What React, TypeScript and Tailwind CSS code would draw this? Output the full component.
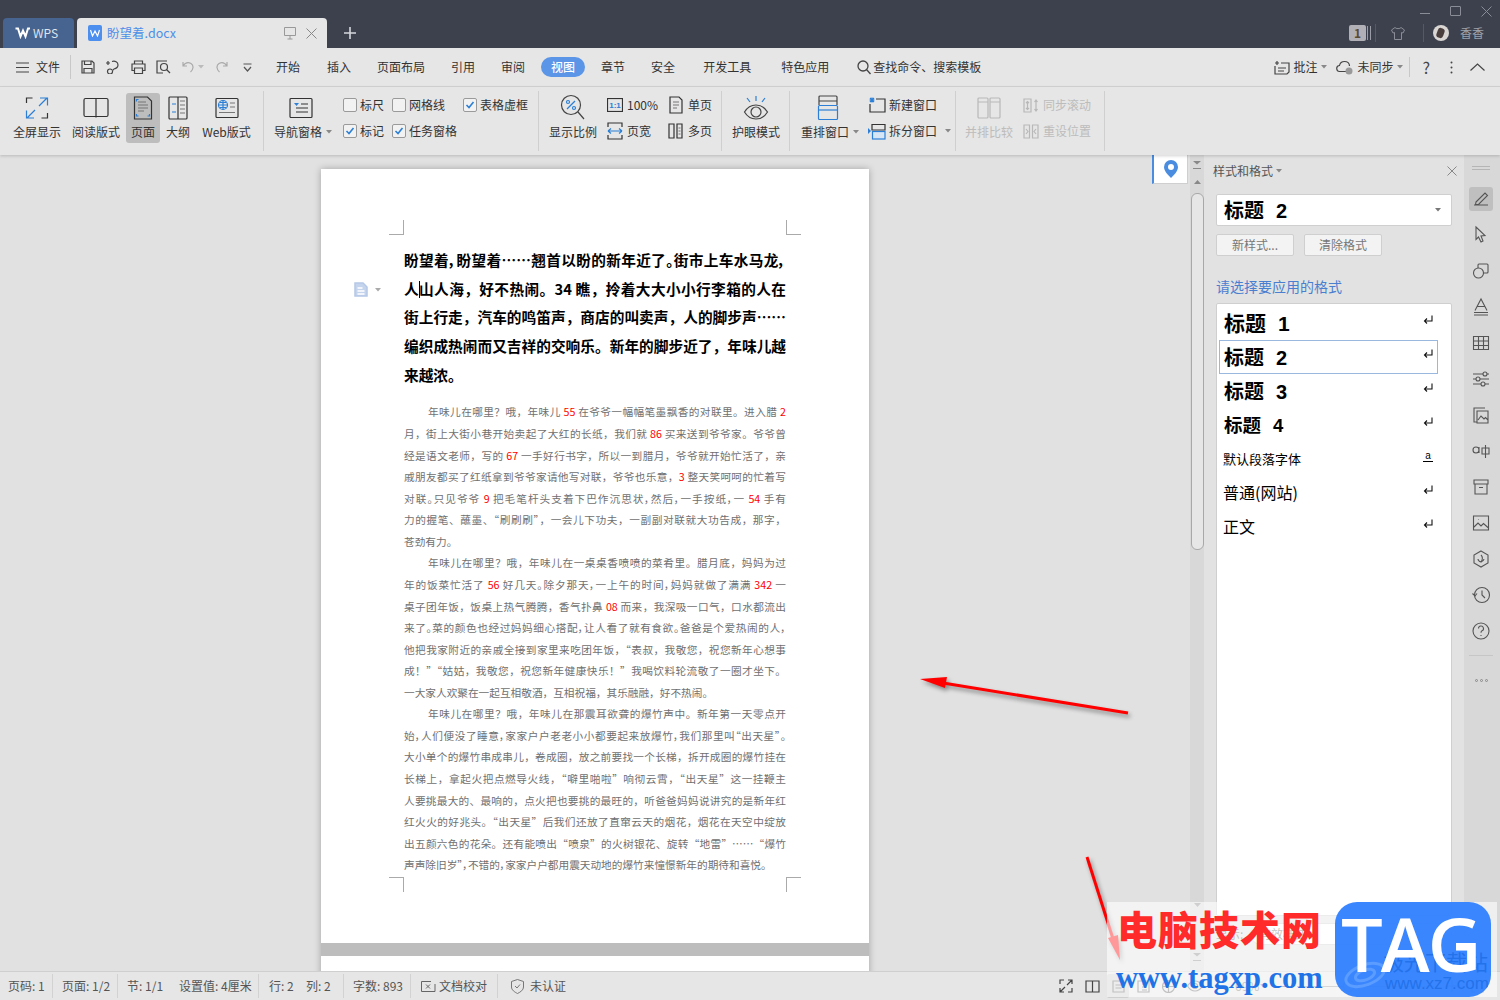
import type { ReactNode } from "react";

const cjk = "font-['Noto_Sans_CJK_SC','Liberation_Sans',sans-serif]";

const headingLines = [
  "盼望着，盼望着……翘首以盼的新年近了。街市上车水马龙，",
  "人山人海，好不热闹。34 瞧，拎着大大小小行李箱的人在",
  "街上行走，汽车的鸣笛声，商店的叫卖声，人的脚步声……",
  "编织成热闹而又吉祥的交响乐。新年的脚步近了，年味儿越",
];

const paragraphs = [
  [
    "年味儿在哪里？哦，年味儿 55 在爷爷一幅幅笔墨飘香的对联里。进入腊 2",
    "月，街上大街小巷开始卖起了大红的长纸，我们就 86 买来送到爷爷家。爷爷曾",
    "经是语文老师，写的 67 一手好行书字，所以一到腊月，爷爷就开始忙活了，亲",
    "戚朋友都买了红纸拿到爷爷家请他写对联，爷爷也乐意，3 整天笑呵呵的忙着写",
    "对联。只见爷爷 9 把毛笔杆头支着下巴作沉思状，然后，一手按纸，一 54 手有",
    "力的握笔、蘸墨、“刷刷刷”，一会儿下功夫，一副副对联就大功告成，那字，",
    "苍劲有力。",
  ],
  [
    "年味儿在哪里？哦，年味儿在一桌桌香喷喷的菜肴里。腊月底，妈妈为过",
    "年的饭菜忙活了 56 好几天。除夕那天，一上午的时间，妈妈就做了满满 342 一",
    "桌子团年饭，饭桌上热气腾腾，香气扑鼻 08 而来，我深吸一口气，口水都流出",
    "来了。菜的颜色也经过妈妈细心搭配，让人看了就有食欲。爸爸是个爱热闹的人，",
    "他把我家附近的亲戚全接到家里来吃团年饭，“表叔，我敬您，祝您新年心想事",
    "成！”“姑姑，我敬您，祝您新年健康快乐！”我喝饮料轮流敬了一圈才坐下。",
    "一大家人欢聚在一起互相敬酒，互相祝福，其乐融融，好不热闹。",
  ],
  [
    "年味儿在哪里？哦，年味儿在那震耳欲聋的爆竹声中。新年第一天零点开",
    "始，人们便没了睡意，家家户户老老小小都要起来放爆竹，我们那里叫“出天星”。",
    "大小单个的爆竹串成串儿，卷成圈，放之前要找一个长梯，拆开成圈的爆竹挂在",
    "长梯上，拿起火把点燃导火线，“噼里啪啦”响彻云霄，“出天星”这一挂鞭主",
    "人要挑最大的、最响的，点火把也要挑的最旺的，听爸爸妈妈说讲究的是新年红",
    "红火火的好兆头。“出天星”后我们还放了直窜云天的烟花，烟花在天空中绽放",
    "出五颜六色的花朵。还有能喷出“喷泉”的火树银花、旋转“地雷”……“爆竹",
    "声声除旧岁”，不错的，家家户户都用震天动地的爆竹来憧憬新年的期待和喜悦。",
  ],
];

// rough width in em, digits and spaces count for about half a character
function emWidth(text: string) {
  let n = 0;
  for (const c of text) n += /[\d ]/.test(c) ? 0.5 : 1;
  return n;
}

function Ico({ w = 20, h = 20, color = "#444", sw = 1.2, children }: { w?: number; h?: number; color?: string; sw?: number; children: ReactNode }) {
  return (
    <svg width={w} height={h} viewBox={`0 0 ${w} ${h}`} fill="none" stroke={color} strokeWidth={sw} className="shrink-0">
      {children}
    </svg>
  );
}

function Caret({ color = "#888" }: { color?: string }) {
  return (
    <svg width="6" height="4" viewBox="0 0 6 4" className="shrink-0">
      <path d="M0 0h6L3 3.5z" fill={color} />
    </svg>
  );
}

const BLUE = "#2b7fd6";

const icons = {
  fullscreen: (
    <Ico w={24} h={24} color="#333">
      <path d="M1.5 7V2h6M22.5 17v5h-6" />
      <path d="M15 2h7.5v7.5M22 2l-8 8M9 22H1.5v-7.5M2 22l8-8" stroke={BLUE} />
    </Ico>
  ),
  book: (
    <Ico w={26} h={22} color="#333">
      <rect x="1" y="1.5" width="24" height="18" rx="1.5" />
      <path d="M13 1.5v19" />
    </Ico>
  ),
  page: (
    <Ico w={20} h={24} color="#333">
      <path d="M1.5 1h13l4 4v18h-17z" />
      <path d="M5 6h8M5 9h10M5 12h10M5 15h6" stroke="#777" />
      <path d="M3.5 5.5V3.500h2M16.5 18v2h-2M3.5 18v2h2" stroke={BLUE} />
    </Ico>
  ),
  outline: (
    <Ico w={20} h={24} color="#333">
      <rect x="1" y="1" width="18" height="22" rx="1" />
      <path d="M10 1v22" />
      <path d="M4 8h4M4 16h4" stroke={BLUE} />
      <path d="M12 5h5M12 9h5M12 13h5M12 17h5" stroke="#777" />
    </Ico>
  ),
  web: (
    <Ico w={24} h={22} color="#333">
      <rect x="1" y="1.5" width="22" height="19" rx="1" />
      <circle cx="8" cy="8" r="4.5" stroke={BLUE} />
      <path d="M3.5 8h9M8 3.5v9M5 5.500h6M5 10.500h6" stroke={BLUE} />
      <path d="M15 6h5M15 10h5M4 15.500h16" stroke="#777" />
    </Ico>
  ),
  nav: (
    <Ico w={24} h={22} color="#333">
      <rect x="1" y="1.5" width="22" height="19" rx="1" />
      <path d="M5 6h5L7.5 9z" fill={BLUE} stroke="none" />
      <path d="M12 7h7M7 11h12M7 15h12" />
    </Ico>
  ),
  zoom: (
    <Ico w={26} h={28} color="#444">
      <circle cx="11" cy="11" r="9.5" />
      <path d="M18 18l6 7" />
      <path d="M7 15l8-8" stroke={BLUE} />
      <circle cx="8" cy="8" r="1.5" stroke={BLUE} />
      <circle cx="14" cy="14" r="1.5" stroke={BLUE} />
    </Ico>
  ),
  one: (
    <Ico w={16} h={14} color="#333">
      <rect x="0.5" y="0.5" width="15" height="13" />
      <text x="8" y="10" textAnchor="middle" fontSize="8" fontWeight="700" fill={BLUE} stroke="none" fontFamily="Liberation Sans, sans-serif">1:1</text>
    </Ico>
  ),
  pagewidth: (
    <Ico w={16} h={18} color="#333">
      <path d="M1 5V1h14v4M1 13v4h14v-4" />
      <path d="M1 9h14M1 9l3-2.5M1 9l3 2.5M15 9l-3-2.5M15 9l-3 2.5" stroke={BLUE} />
    </Ico>
  ),
  single: (
    <Ico w={14} h={18} color="#333">
      <path d="M1 1h9l3 3v13H1z" />
      <path d="M4 6h6M4 9h6M4 12h4" stroke="#777" />
    </Ico>
  ),
  multi: (
    <Ico w={15} h={16} color="#333">
      <path d="M1 1h5v14H1zM9 1h5v14H9z" />
      <path d="M10.5 5h2M10.5 8h2M10.5 11h2" stroke="#777" />
    </Ico>
  ),
  eye: (
    <Ico w={26} h={26} color="#444">
      <path d="M1.5 17c3-5 7-7 11.5-7s8.5 2 11.5 7c-3 5-7 7-11.5 7s-8.5-2-11.5-7z" />
      <circle cx="13" cy="17" r="5" />
      <path d="M13 1v5M4 3l3 4M22 3l-3 4" stroke={BLUE} />
    </Ico>
  ),
  arrange: (
    <Ico w={22} h={26} color="#444">
      <path d="M2 10V2a1 1 0 0 1 1-1h16a1 1 0 0 1 1 1v8M2 6h18" />
      <rect x="1.5" y="10.5" width="19" height="14" rx="1" stroke={BLUE} />
      <path d="M1.5 15h19" stroke={BLUE} />
    </Ico>
  ),
  newwin: (
    <Ico w={17} h={16} color="#333">
      <path d="M7 2h9v13H1V7" />
      <path d="M1 1l4 4M5 1L1 5M3 .5v5M.5 3h5" stroke={BLUE} />
    </Ico>
  ),
  split: (
    <Ico w={18} h={17} color="#333">
      <path d="M4 1.5h13V7H4zM4 1.5V4" />
      <rect x="4.5" y="8.5" width="12.5" height="7.5" stroke={BLUE} fill="#d7e6f6" />
      <path d="M0 5l3 3-3 3z" fill={BLUE} stroke="none" />
    </Ico>
  ),
  compare: (
    <Ico w={24} h={22} color="#b8b8b8">
      <rect x="1" y="1" width="10" height="20" rx="1" />
      <rect x="13" y="1" width="10" height="20" rx="1" />
      <path d="M1 5h10M13 5h10" />
    </Ico>
  ),
  syncScroll: (
    <Ico w={17} h={15} color="#b8b8b8">
      <path d="M1 1h7v13H1zM4.5 3.500v8M3 5l1.500-1.500L6 5M3 10l1.500 1.500L6 10M13 2v11M11.500 4L13 2l1.500 2M11.500 11l1.500 2 1.500-2" />
    </Ico>
  ),
  resetPos: (
    <Ico w={16} h={15} color="#b8b8b8">
      <path d="M1 1h5.5v13H1zM9.5 1H15v13H9.500zM3 5l2 2.500L3 10M13 5l-2 2.500L13 10" />
    </Ico>
  ),
};

function Big({ w, label, icon, active, disabled, caret }: { w: string; label: string; icon: ReactNode; active?: boolean; disabled?: boolean; caret?: boolean }) {
  return (
    <div className={`${w} mt-[6px] h-[50px] shrink-0 flex flex-col items-center rounded-[3px] ${active ? "bg-[#bdbdbd]" : ""}`}>
      <div className="h-[30px] flex items-center justify-center">{icon}</div>
      <div className={`h-[18px] flex items-center gap-[4px] text-[12px] whitespace-nowrap ${caret ? "pl-[4px]" : ""} ${disabled ? "text-[#bcbcbc]" : "text-[#333]"}`}>
        {label}
        {caret && <Caret />}
      </div>
    </div>
  );
}

function Sep({ ml }: { ml: string }) {
  return <div className={`${ml} mt-[4px] h-[60px] w-px shrink-0 bg-[#cfcfcf]`} />;
}

function Check({ label, checked }: { label: string; checked?: boolean }) {
  return (
    <div className="flex items-center gap-[3px] text-[12px] text-[#333] whitespace-nowrap">
      <span className="w-[14px] h-[14px] rounded-[2px] border border-[#9a9a9a] bg-[#f2f2f2] flex items-center justify-center">
        {checked && (
          <svg width="10" height="10" viewBox="0 0 10 10" fill="none" stroke={BLUE} strokeWidth="1.6">
            <path d="M1.5 5l2.5 2.500L8.500 2" />
          </svg>
        )}
      </span>
      {label}
    </div>
  );
}

function Small({ icon, label, caret, disabled }: { icon: ReactNode; label: string; caret?: boolean; disabled?: boolean }) {
  return (
    <div className={`h-[26px] flex items-center gap-[4px] text-[12px] whitespace-nowrap ${disabled ? "text-[#bcbcbc]" : "text-[#333]"}`}>
      <span className="w-[16px] flex justify-center">{icon}</span>
      {label}
      {caret && <span className="ml-[4px]"><Caret /></span>}
    </div>
  );
}

function TitleBar() {
  return (
    <div className="h-[48px] shrink-0 bg-[#3d414d] flex">
      <div className="ml-[3px] mt-[18px] w-[71px] h-[30px] rounded-t-[4px] bg-[#46648f] flex items-center pl-[12px] gap-[2px]">
        <svg width="16" height="12" viewBox="0 0 16 12" fill="none" stroke="#fff" strokeWidth="2">
          <path d="M0.5 1.5h2.5l2.5 8 2.500-6 2.500 6 2.500-8h2" />
        </svg>
        <span className="text-[12px] text-[#dfe5ee]">WPS</span>
      </div>
      <div className="ml-[3px] mt-[18px] w-[250px] h-[30px] rounded-t-[4px] bg-[#e6e6e6] flex items-center pl-[11px] pr-[10px]">
        <span className="w-[14px] h-[16px] rounded-[2px] bg-[#4d8fee] flex items-center justify-center">
          <svg width="10" height="8" viewBox="0 0 10 8" fill="none" stroke="#fff" strokeWidth="1.2">
            <path d="M.5 1l2 6 2.500-5 2.500 5 2-6" />
          </svg>
        </span>
        <span className="ml-[5px] text-[12.5px] text-[#4d8fe8]">盼望着.docx</span>
        <span className="ml-auto mr-[10px]">
          <Ico w={12} h={13} color="#999" sw={1}>
            <path d="M.5.5h11v8H.5zM6 8.500V12M3.500 12h5" />
          </Ico>
        </span>
        <Ico w={11} h={11} color="#888" sw={1}>
          <path d="M.5.5l10 10M10.500.5l-10 10" />
        </Ico>
      </div>
      <div className="ml-[17px] mt-[27px]">
        <Ico w={12} h={12} color="#d5d7dc" sw={1.6}>
          <path d="M6 0v12M0 6h12" />
        </Ico>
      </div>
      <div className="ml-auto w-[160px] pr-[8px] flex flex-col">
        <div className="h-[20px] flex items-center justify-end gap-[20px] pt-[2px]">
          <span className="w-[10px] h-px bg-[#8a8d96] mt-[4px]" />
          <span className="w-[11px] h-[10px] border border-[#8a8d96] rounded-[1px]" />
          <Ico w={11} h={11} color="#8a8d96" sw={1}>
            <path d="M.5.5l10 10M10.500.5l-10 10" />
          </Ico>
        </div>
        <div className="mt-[4px] mr-[8px] flex items-center justify-end text-[12px] text-[#9ea1a9]">
          <span className="w-[17px] h-[16px] rounded-[2px] bg-[#b0b0b6] text-[12px] leading-[16px] text-center text-[#5a4a30] font-semibold">1</span>
          <span className="ml-[1px] w-[4px] h-[14px] border-x border-[#9a9da5]" />
          <span className="ml-[4px] h-[18px] w-px bg-[#555964]" />
          <span className="ml-[15px]">
            <Ico w={14} h={13} color="#8a8d96" sw={1}>
              <path d="M4 .5L.5 3l1.500 3 1.500-.5v7h7v-7l1.500.5L13.500 3 10 .5C9.500 2 4.500 2 4 .5z" />
            </Ico>
          </span>
          <span className="ml-[18px] h-[18px] w-px bg-[#555964]" />
          <span className="ml-[9px] w-[16px] h-[16px] rounded-full bg-[#d9d6d4] flex items-center justify-center overflow-hidden">
            <span className="w-[7px] h-[10px] rounded-[3px] bg-[#4a3f3d] rotate-[20deg]" />
          </span>
          <span className="ml-[11px]">香香</span>
        </div>
      </div>
    </div>
  );
}

const menuTabs = [
  { label: "开始", cls: "ml-[24px]" },
  { label: "插入", cls: "ml-[27px]" },
  { label: "页面布局", cls: "ml-[26px]" },
  { label: "引用", cls: "ml-[26px]" },
  { label: "审阅", cls: "ml-[26px]" },
];
const menuTabs2 = [
  { label: "章节", cls: "ml-[16px]" },
  { label: "安全", cls: "ml-[26px]" },
  { label: "开发工具", cls: "ml-[28px]" },
  { label: "特色应用", cls: "ml-[30px]" },
];

function MenuRow() {
  return (
    <div className="h-[39px] shrink-0 bg-[#e6e6e6] border-b border-[#d4d4d4] flex items-center text-[12px] text-[#333]">
      <span className="ml-[16px]">
        <Ico w={13} h={11} color="#444">
          <path d="M0 1h13M0 5.500h13M0 10h13" />
        </Ico>
      </span>
      <span className="ml-[7px]">文件</span>
      <span className="ml-[10px] w-px h-[24px] bg-[#c8c8c8]" />
      <span className="ml-[10px]">
        <Ico w={14} h={14}>
          <path d="M1 1h10l2 2v10H1zM3.500 1v3.500h6.500V1M3 13V8.500h8V13" />
        </Ico>
      </span>
      <span className="ml-[10px]">
        <Ico w={14} h={14}>
          <path d="M1 3h4M3 1v4M7 1.500c3-1 6 .5 6 3.500s-2 3.500-4 4c-1 .5-1.500 1-1.500 2.500a2.500 2.500 0 1 1-2.500-2.500c1 0 1.500.5 2 1" />
        </Ico>
      </span>
      <span className="ml-[12px]">
        <Ico w={15} h={14}>
          <path d="M3.500 4V1h8v3M3.500 10.500H1V4h13v6.500h-2.500M3.500 8h8v5.500h-8z" />
        </Ico>
      </span>
      <span className="ml-[10px]">
        <Ico w={16} h={14}>
          <path d="M11 1H1v12h6" />
          <circle cx="8" cy="7" r="3.5" />
          <path d="M10.500 9.500L14 13" />
        </Ico>
      </span>
      <span className="ml-[10px]">
        <Ico w={13} h={13} color="#aaa">
          <path d="M1 1v4h4M1 5c2-3 5-4 8-2.500 3 2 2.500 6-.5 8.500" />
        </Ico>
      </span>
      <span className="ml-[3px]"><Caret color="#bbb" /></span>
      <span className="ml-[11px]">
        <Ico w={13} h={13} color="#aaa">
          <path d="M12 1v4H8M12 5C10 2 7 1 4 2.500 1 4.500 1.500 8.500 4.500 11" />
        </Ico>
      </span>
      <span className="ml-[15px]">
        <Ico w={9} h={9} color="#555">
          <path d="M.5 1h8M1 4l3.500 4L8 4" />
        </Ico>
      </span>
      {menuTabs.map((t) => (
        <span key={t.label} className={t.cls}>{t.label}</span>
      ))}
      <span className="ml-[16px] w-[44px] h-[20px] rounded-full bg-[#5b95e8] text-white font-medium text-center leading-[20px]">视图</span>
      {menuTabs2.map((t) => (
        <span key={t.label} className={t.cls}>{t.label}</span>
      ))}
      <span className="ml-[28px]">
        <Ico w={14} h={15} color="#444" sw={1.3}>
          <circle cx="6" cy="6" r="5" />
          <path d="M9.500 9.500L13.500 14" />
        </Ico>
      </span>
      <span className="ml-[2px]">查找命令、搜索模板</span>
      <div className="ml-auto flex items-center">
        <Ico w={16} h={15} color="#444">
          <path d="M1 3h4M3 1v4M7 3h8v9l-2 2H1V6M4 8h8M4 11h6" />
        </Ico>
        <span className="ml-[3px]">批注</span>
        <span className="ml-[4px]"><Caret /></span>
        <span className="ml-[9px]">
          <Ico w={18} h={15} color="#444">
            <path d="M10 11.500H4a3 3 0 0 1-.5-6C4 3 6 1.500 8.500 1.500c3 0 5 2 5 4.500" />
            <circle cx="13" cy="11" r="3.5" fill="#999" stroke="none" />
          </Ico>
        </span>
        <span className="ml-[3px]">未同步</span>
        <span className="ml-[4px]"><Caret /></span>
        <span className="ml-[6px] w-px h-[20px] bg-[#c8c8c8]" />
        <span className="ml-[12px] text-[16px] leading-none text-[#444]">?</span>
        <span className="ml-[20px]">
          <Ico w={3} h={13} color="#444" sw={0}>
            <circle cx="1.5" cy="1.5" r="1" fill="#444" />
            <circle cx="1.5" cy="6.5" r="1" fill="#444" />
            <circle cx="1.5" cy="11.5" r="1" fill="#444" />
          </Ico>
        </span>
        <span className="ml-[17px] mr-[15px]">
          <Ico w={15} h={8} color="#444">
            <path d="M.5 7.500L7.500 1l7 6.500" />
          </Ico>
        </span>
      </div>
    </div>
  );
}

function Ribbon() {
  return (
    <div className="h-[68px] shrink-0 bg-[#e6e6e6] flex relative z-10 shadow-[0_1px_3px_rgba(0,0,0,0.18)]">
      <div className="ml-[12px]"><Big w="w-[50px]" label="全屏显示" icon={icons.fullscreen} /></div>
      <div className="ml-[9px]"><Big w="w-[50px]" label="阅读版式" icon={icons.book} /></div>
      <div className="ml-[5px]"><Big w="w-[34px]" label="页面" icon={icons.page} active /></div>
      <div className="ml-[1px]"><Big w="w-[34px]" label="大纲" icon={icons.outline} /></div>
      <div className="ml-[5px]"><Big w="w-[53px]" label="Web版式" icon={icons.web} /></div>
      <Sep ml="ml-[10px]" />
      <div className="ml-[6px]"><Big w="w-[62px]" label="导航窗格" icon={icons.nav} caret /></div>
      <div className="ml-[11px] pt-[5px] grid grid-cols-[49px_71px_65px] grid-rows-[26px_26px] items-center">
        <Check label="标尺" />
        <Check label="网格线" />
        <Check label="表格虚框" checked />
        <Check label="标记" checked />
        <Check label="任务窗格" checked />
      </div>
      <Sep ml="ml-[10px]" />
      <div className="ml-[9px]"><Big w="w-[50px]" label="显示比例" icon={icons.zoom} /></div>
      <div className="ml-[9px] pt-[5px] w-[61px]">
        <Small icon={icons.one} label="100%" />
        <Small icon={icons.pagewidth} label="页宽" />
      </div>
      <div className="pt-[5px] w-[44px]">
        <Small icon={icons.single} label="单页" />
        <Small icon={icons.multi} label="多页" />
      </div>
      <Sep ml="ml-[9px]" />
      <div className="ml-[9px]"><Big w="w-[50px]" label="护眼模式" icon={icons.eye} /></div>
      <Sep ml="ml-[8px]" />
      <div className="ml-[9px]"><Big w="w-[58px]" label="重排窗口" icon={icons.arrange} caret /></div>
      <div className="ml-[12px] pt-[5px] w-[77px]">
        <Small icon={icons.newwin} label="新建窗口" />
        <Small icon={icons.split} label="拆分窗口" caret />
      </div>
      <Sep ml="ml-[9px]" />
      <div className="ml-[8px]"><Big w="w-[50px]" label="并排比较" icon={icons.compare} disabled /></div>
      <div className="ml-[9px] pt-[5px] w-[68px]">
        <Small icon={icons.syncScroll} label="同步滚动" disabled />
        <Small icon={icons.resetPos} label="重设位置" disabled />
      </div>
      <Sep ml="ml-[13px]" />
    </div>
  );
}

function BodyLine({ text, first, last }: { text: string; first?: boolean; last?: boolean }) {
  const parts = text.split(/(\d+)/);
  const tight = emWidth(text) + (first ? 2 : 0) > 35.4;
  return (
    <div className={`h-[21.57px] leading-[21.57px] whitespace-nowrap ${first ? "pl-[24px]" : ""} ${last ? "" : "[text-align-last:justify]"} ${tight ? "[font-feature-settings:'palt']" : ""}`}>
      {parts.map((p, i) =>
        i % 2 === 1 ? (
          <span key={i} className="text-[#ff0000]">{p}</span>
        ) : (
          <span key={i}>{p}</span>
        ),
      )}
    </div>
  );
}

function Crop({ cls }: { cls: string }) {
  return <div className={`absolute w-[15px] h-[15px] border-[#aaa] ${cls}`} />;
}

function Page() {
  return (
    <div className="relative h-[774px] bg-white pl-[83px] pr-[83px] pt-[77px]">
      <Crop cls="left-[68px] top-[51px] border-r border-b" />
      <Crop cls="left-[465px] top-[51px] border-l border-b" />
      <Crop cls="left-[68px] top-[708px] border-r border-t" />
      <Crop cls="left-[465px] top-[708px] border-l border-t" />
      <div className="absolute left-[33px] top-[113px] flex items-center gap-[7px]">
        <Ico w={14} h={15} color="#b5c8e6" sw={1.5}>
          <path d="M1 1h8l4 4v9H1z" fill="#c4d4ec" />
          <path d="M3.500 6h5M3.500 9h7M3.500 12h7" stroke="#fff" />
        </Ico>
        <Caret color="#aaa" />
      </div>
      <div className="absolute left-[98px] top-[112px] w-px h-[17px] bg-black" />
      <div className="text-[14.67px] font-bold text-black">
        {headingLines.map((l) => (
          <div key={l} className={`h-[28.7px] leading-[28.7px] whitespace-nowrap [text-align-last:justify] ${emWidth(l) > 26 ? "[font-feature-settings:'palt']" : ""}`}>{l}</div>
        ))}
        <div className="h-[28.7px] leading-[28.7px]">来越浓。</div>
      </div>
      <div className="mt-[12px] text-[10.67px] text-[#707070]">
        {paragraphs.map((para, pi) =>
          para.map((line, li) => (
            <BodyLine key={`${pi}-${li}`} text={line} first={li === 0} last={li === para.length - 1} />
          )),
        )}
      </div>
    </div>
  );
}

function Canvas() {
  return (
    <div className="relative w-[1190px] shrink-0 bg-[#e1e1e1] pt-[14px] overflow-hidden">
      <div className="mx-auto w-[548px] flex flex-col gap-[13px] bg-[#bdbdbd] shadow-[0_0_7px_rgba(0,0,0,0.28)]">
        <Page />
        <div className="h-[300px] bg-white" />
      </div>
      <div className="absolute right-[2px] top-0 w-[36px] h-[29px] bg-white border-l-2 border-l-[#4a8de0] border-r border-b border-[#cfcfcf] flex items-center justify-center">
        <svg width="14" height="18" viewBox="0 0 14 18">
          <path d="M7 0a7 7 0 0 1 7 7c0 4-4 8-7 11C4 15 0 11 0 7a7 7 0 0 1 7-7z" fill="#4a8de0" />
          <circle cx="7" cy="7" r="3" fill="#fff" />
        </svg>
      </div>
    </div>
  );
}

function ScrollDouble() {
  return (
    <Ico w={8} h={8} color="#888" sw={1}>
      <path d="M0 0h8L4 3.500z" fill="#888" stroke="none" />
      <path d="M0 7.500h8" />
    </Ico>
  );
}

function Scrollbar() {
  return (
    <div className="w-[14px] shrink-0 bg-[#d8d8d8] flex flex-col items-center">
      <div className="mt-[6px]"><ScrollDouble /></div>
      <div className="mt-[11px]"><svg width="7" height="4" viewBox="0 0 7 4"><path d="M0 4h7L3.500 0z" fill="#888" /></svg></div>
      <div className="mt-[9px] w-[13px] h-[357px] rounded-[6px] bg-[#e6e6e6] border border-[#a8a8a8]" />
      <div className="mt-[353px]"><svg width="7" height="4" viewBox="0 0 7 4"><path d="M0 0h7L3.500 4z" fill="#888" /></svg></div>
      <div className="mt-[46px]"><ScrollDouble /></div>
    </div>
  );
}

function StyleRow({ name, num, size, numSize, selected, bold, mark = "return" }: { name: string; num?: string; size: string; numSize?: string; selected?: boolean; bold?: boolean; mark?: "return" | "a" }) {
  return (
    <div className={`h-[34px] ml-[2px] mr-[13px] pl-[4px] pr-[4px] flex items-center justify-between text-black border ${selected ? "border-[#9ab8de]" : "border-transparent"}`}>
      <span className={`flex items-baseline gap-[12px] ${size} ${bold ? "font-bold" : ""}`}>
        {name}
        {num && <span className={`font-['Liberation_Sans',sans-serif] ${numSize ?? ""}`}>{num}</span>}
      </span>
      <span className="-mt-[6px]">
        {mark === "return" ? (
          <Ico w={10} h={10} color="#111" sw={1.1}>
            <path d="M9 .5V6H1.500M4 3.500L1.500 6 4 8.500" />
          </Ico>
        ) : (
          <span className="block w-[10px] text-center text-[10px] leading-[10px] border-b border-black font-['Liberation_Sans',sans-serif]">a</span>
        )}
      </span>
    </div>
  );
}

function StylePanel() {
  return (
    <div className="w-[260px] shrink-0 bg-[#e2e2e2] flex flex-col relative pl-[12px] pr-[12px]">
      <div className="h-[33px] flex items-center justify-between -ml-[3px] -mr-[5px] pb-[1px]">
        <span className="flex items-center gap-[3px] text-[12px] text-[#555]">样式和格式<Caret /></span>
        <Ico w={10} h={10} color="#888" sw={1}>
          <path d="M.5.5l9 9M9.500.5l-9 9" />
        </Ico>
      </div>
      <div className="mt-[6px] h-[32px] bg-white border border-[#cfcfcf] rounded-[2px] flex items-center justify-between pl-[7px] pr-[10px]">
        <span className="flex items-baseline gap-[12px] text-[20px] font-bold text-black">
          标题<span className="font-['Liberation_Sans',sans-serif]">2</span>
        </span>
        <Caret color="#777" />
      </div>
      <div className="mt-[8px] flex gap-[10px]">
        <div className="w-[78px] h-[22px] bg-[#f3f3f3] border border-[#cfcfcf] rounded-[2px] text-[12px] text-[#777] text-center leading-[20px]">新样式...</div>
        <div className="w-[78px] h-[22px] bg-[#f3f3f3] border border-[#cfcfcf] rounded-[2px] text-[12px] text-[#777] text-center leading-[20px]">清除格式</div>
      </div>
      <div className="mt-[20px] text-[14px] leading-[20px] text-[#4a7fd0]">请选择要应用的格式</div>
      <div className="mt-[7px] h-[613px] bg-white border border-[#cfcfcf] rounded-[2px] pt-[2px]">
        <StyleRow name="标题" num="1" size="text-[21px]" bold />
        <StyleRow name="标题" num="2" size="text-[20px]" bold selected />
        <StyleRow name="标题" num="3" size="text-[20px]" bold />
        <StyleRow name="标题" num="4" size="text-[18.5px]" bold />
        <StyleRow name="默认段落字体" size="text-[13px] -ml-[1px]" mark="a" />
        <StyleRow name="普通(网站)" size="text-[16px] -mt-[2px] -ml-[1px]" />
        <StyleRow name="正文" size="text-[16px] -mt-[2px] -ml-[1px]" />
      </div>
      <div className="mt-[7px] flex items-center text-[12px] text-[#666]">
        <span className="w-[34px]">显示:</span>
        <div className="flex-1 h-[22px] bg-white border border-[#cfcfcf] rounded-full pl-[8px] leading-[20px]">有效样式</div>
      </div>
    </div>
  );
}

const stripIcons: ReactNode[] = [
  <path key="a" d="M3 16h14M5 13l9-9 2.5 2.5-9 9H4.500z" />,
  <path key="b" d="M5 2l9 8.500-4 .5 2 5-2 1-2.500-5L5 14.500z" />,
  <g key="c"><rect x="7" y="3" width="10" height="9" rx="1" /><circle cx="7.5" cy="12" r="5" fill="#d8d8d8" /></g>,
  <path key="d" d="M4 13.500L10 2l6 11.500M6.500 9.500h7M3 15.500h14M3 18h14" />,
  <path key="e" d="M2.500 3.500h15v13h-15zM2.500 8h15M2.500 12.500h15M7.500 3.500v13M12.500 3.500v13" />,
  <g key="f"><path d="M2 5h10M16 5h2M2 10h3M9 10h9M2 15h8M14 15h4" /><circle cx="14" cy="5" r="2" /><circle cx="7" cy="10" r="2" /><circle cx="12" cy="15" r="2" /></g>,
  <path key="g" d="M14 3H3v14h3M6 6h11v12H6zM7 15l3-4 3 3 1.500-1.500L17 15" />,
  <path key="h" d="M2 9a3 3 0 1 0 6 0 3 3 0 0 0-6 0zM8 6v6M11 7h7v6h-7zM14.500 4v13" />,
  <path key="i" d="M3 3h14v4H3zM4 7v10h12V7M8 10.500h4" />,
  <path key="j" d="M2.500 3h15v14h-15zM3 14l4-4 3 3 2.500-2.500 5 4.500M7 6.500h.5" />,
  <path key="k" d="M10 2l7 4v8l-7 4-7-4V6zM10 6c2 2 2 4 0 7-3-1-3-2-3-3M10 13c2-1 3-2 3-3" />,
  <g key="l"><circle cx="11" cy="10" r="7.5" /><path d="M11 5.500V10l3 3M1.500 8.500L4 11l2-2.500" /></g>,
  <g key="m"><circle cx="10" cy="10" r="8" /><path d="M7.500 7.500a2.500 2.500 0 1 1 3.500 2.300c-.7.4-1 .8-1 2M10 14v1" /></g>,
];

function RightStrip() {
  return (
    <div className="flex-1 bg-[#d8d8d8] flex flex-col items-center pr-[2px]">
      <div className="mt-[11px] w-[18px] h-[4px] border-y border-[#b5b5b5]" />
      <div className="mt-[17px] flex flex-col items-center">
        {stripIcons.map((ic, i) => (
          <div key={i} className={`w-[24px] h-[24px] mb-[12px] rounded-[3px] flex items-center justify-center ${i === 0 ? "bg-[#bfbfbf]" : ""}`}>
            <Ico w={20} h={20} color="#555" sw={1.1}>{ic}</Ico>
          </div>
        ))}
      </div>
      <div className="w-[24px] h-px bg-[#c6c6c6]" />
      <div className="mt-[23px] flex gap-[2px]">
        <span className="w-[3px] h-[3px] rounded-full border border-[#888]" />
        <span className="w-[3px] h-[3px] rounded-full border border-[#888]" />
        <span className="w-[3px] h-[3px] rounded-full border border-[#888]" />
      </div>
    </div>
  );
}

function StatusBar() {
  const div = "w-px h-[24px] bg-[#d2d2d2]";
  return (
    <div className="h-[29px] shrink-0 bg-[#e6e6e6] border-t border-[#cfcfcf] flex items-center text-[12px] text-[#555] whitespace-nowrap">
      <span className="ml-[8px] w-[38px]">页码: 1</span>
      <span className={`ml-[6px] ${div}`} />
      <span className="ml-[9px] w-[50px]">页面: 1/2</span>
      <span className={`ml-[5px] ${div}`} />
      <span className="ml-[9px] w-[37px]">节: 1/1</span>
      <span className="ml-[15px] w-[74px]">设置值: 4厘米</span>
      <span className={`ml-[5px] ${div}`} />
      <span className="ml-[10px] w-[26px]">行: 2</span>
      <span className="ml-[11px] w-[26px]">列: 2</span>
      <span className={`ml-[11px] ${div}`} />
      <span className="ml-[9px] w-[52px]">字数: 893</span>
      <span className={`ml-[5px] ${div}`} />
      <span className="ml-[10px]">
        <Ico w={15} h={13} color="#666" sw={1}>
          <path d="M10 1.500H.5v10H14V4M5 4.500l4 4M9 4.500l-4 4" />
        </Ico>
      </span>
      <span className="ml-[3px] w-[48px]">文档校对</span>
      <span className={`ml-[10px] ${div}`} />
      <span className="ml-[13px]">
        <Ico w={13} h={15} color="#777" sw={1}>
          <path d="M6.500.5L12.500 2.500V8c0 3-3 5-6 6.500C3.500 13 .5 11 .5 8V2.500zM4 7l2 2 3-3.500" />
        </Ico>
      </span>
      <span className="ml-[6px]">未认证</span>
      <div className="ml-auto flex items-center pr-[16px] text-[#777]">
        <Ico w={14} h={14} color="#444">
          <path d="M1 5V1h4M13 9v4H9M9 1h4v4M13 1L8 6M5 13H1V9M1 13l5-5" />
        </Ico>
        <span className="ml-[12px]">
          <Ico w={15} h={13} color="#444">
            <path d="M1 1h13v11H1zM7.500 1v11" />
          </Ico>
        </span>
        <div className="ml-[7px] w-[22px] h-[24px] bg-[#cfcfcf] rounded-[2px] flex items-center justify-center">
          <Ico w={13} h={13} color="#666">
            <path d="M1 1h11v11H1zM3.500 5h6M3.500 8h6" />
          </Ico>
        </div>
        <span className="ml-[8px]">
          <Ico w={13} h={13} color="#666">
            <path d="M1 1h11v11H1zM5 4h5M5 7h5M5 10h5" />
          </Ico>
        </span>
        <span className="ml-[12px]">
          <Ico w={13} h={13} color="#666">
            <circle cx="6.5" cy="6.5" r="6" />
            <path d="M.5 6.500h12M6.500.5v12" />
          </Ico>
        </span>
        <span className="ml-[12px]">
          <Ico w={16} h={12} color="#666">
            <path d="M.5 6C3 2 5.500 1 8 1s5 1 7.500 5C13 10 10.500 11 8 11S3 10 .5 6z" />
            <circle cx="8" cy="6" r="2.5" />
          </Ico>
        </span>
        <span className="ml-[32px] w-[22px]">69%</span>
        <span className="ml-[3px]"><Caret /></span>
        <span className="ml-[14px] w-[14px] h-px bg-[#666]" />
        <span className="ml-[3px] relative w-[137px] h-px bg-[#999]">
          <span className="absolute left-[46px] -top-[6px] w-[12px] h-[12px] rounded-full border border-[#777] bg-[#e6e6e6]" />
        </span>
        <span className="ml-[12px]">
          <Ico w={12} h={12} color="#555">
            <path d="M6 0v12M0 6h12" />
          </Ico>
        </span>
        <span className="ml-[13px]">
          <Ico w={13} h={13} color="#555">
            <path d="M1 4V1h3M9 1h3v3M12 9v3H9M4 12H1V9" />
          </Ico>
        </span>
      </div>
    </div>
  );
}

function Arrows() {
  const shadow = "[filter:drop-shadow(2px_3px_2px_rgba(0,0,0,0.4))]";
  return (
    <>
      <svg className={`absolute left-[910px] top-[670px] ${shadow}`} width="225" height="50" viewBox="0 0 225 50">
        <path d="M218 43L33 13" stroke="#ff0000" strokeWidth="3" />
        <path d="M10 9L37 7 35 18z" fill="#ff0000" />
      </svg>
      <svg className={`absolute left-[1080px] top-[850px] ${shadow}`} width="50" height="115" viewBox="0 0 50 115">
        <path d="M7 7L34 92" stroke="#ff0000" strokeWidth="3" />
        <path d="M40 110L28 88 38 85z" fill="#ff0000" />
      </svg>
    </>
  );
}

function Watermark() {
  return (
    <div className="absolute left-[1107px] top-[902px] w-[390px] h-[95px] bg-white/60">
      <div className="absolute left-[10px] top-[2px] text-[40px] leading-[48px] font-black tracking-[1px] text-[#ff2b2b] whitespace-nowrap">电脑技术网</div>
      <div className="absolute left-[9px] top-[58px] text-[30.5px] leading-[36px] font-bold text-[#1f73e6] font-['Liberation_Serif',serif] whitespace-nowrap">www.tagxp.com</div>
      <div className="absolute left-[228px] top-0 w-[156px] h-[95px] rounded-[22px] bg-[#2f80ff]/95 overflow-hidden">
        <svg className="absolute left-[8px] top-[55px]" width="45" height="36" viewBox="0 0 45 36" fill="none" stroke="#5a9cff" strokeWidth="3">
          <ellipse cx="22" cy="18" rx="20" ry="10" transform="rotate(-20 22 18)" />
          <ellipse cx="22" cy="18" rx="10" ry="5" transform="rotate(-20 22 18)" />
        </svg>
        <div className="absolute left-[48px] top-[47px] text-[21px] leading-[24px] text-[#2372ea] whitespace-nowrap">极光下载站</div>
        <div className="absolute left-[50px] top-[72px] text-[17px] leading-[20px] text-[#2372ea] whitespace-nowrap font-['Liberation_Sans',sans-serif]">www.xz7.com</div>
        <div className="absolute left-[6px] top-[-8px] text-[74px] leading-[100px] font-semibold text-white tracking-[-2px] font-['Open_Sans',sans-serif]">TAG</div>
      </div>
    </div>
  );
}

export default function App() {
  return (
    <div className={`relative w-[1500px] h-[1000px] overflow-hidden flex flex-col ${cjk}`}>
      <TitleBar />
      <MenuRow />
      <Ribbon />
      <div className="flex-1 min-h-0 flex">
        <Canvas />
        <Scrollbar />
        <StylePanel />
        <RightStrip />
      </div>
      <StatusBar />
      <Arrows />
      <Watermark />
    </div>
  );
}
